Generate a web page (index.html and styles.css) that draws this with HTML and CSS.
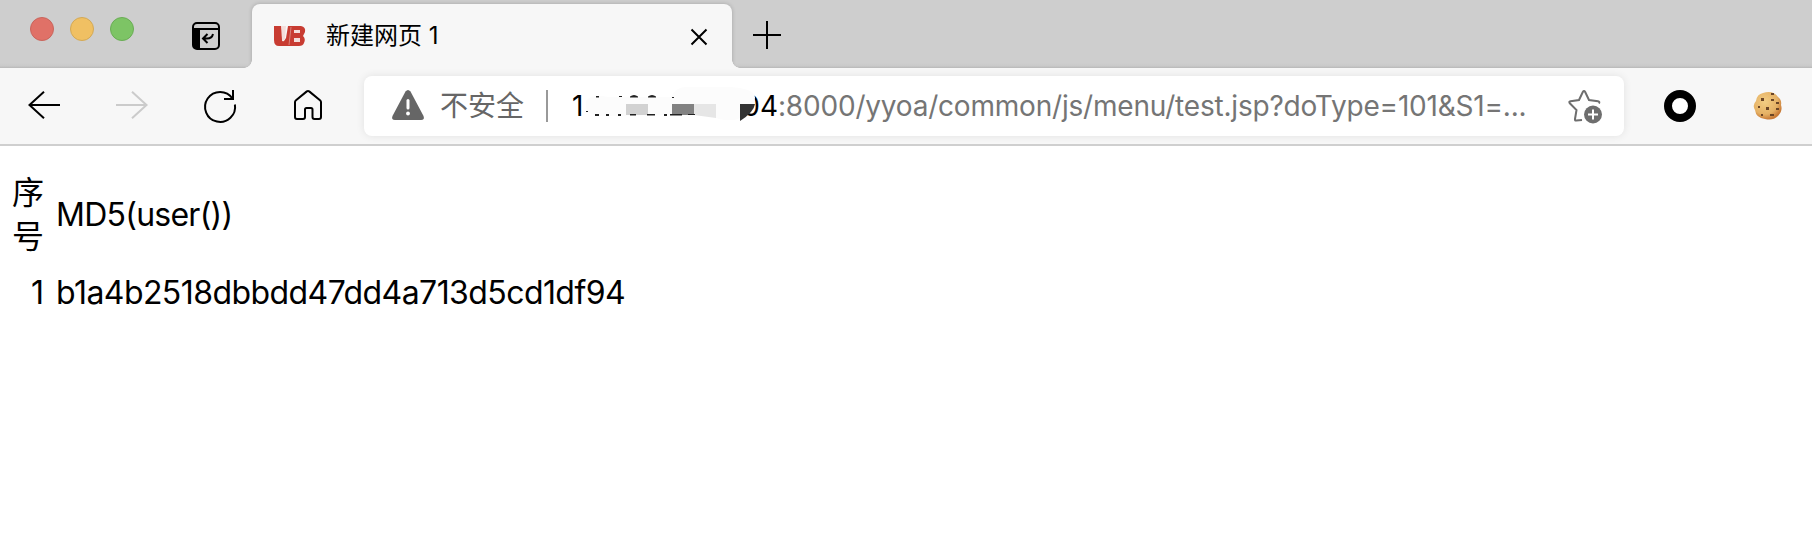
FILE: index.html
```html
<!DOCTYPE html>
<html lang="zh-CN">
<head>
<meta charset="utf-8">
<title>新建网页 1</title>
<link rel="stylesheet" href="styles.css">
</head>
<body>
<header class="tabstrip">
  <div class="lights"><i class="light red"></i><i class="light yellow"></i><i class="light green"></i></div>
  <svg class="tabmenu" width="28" height="28" viewBox="0 0 28 28"><rect x="1" y="1" width="26" height="26" rx="4" fill="none" stroke="#000" stroke-width="2"/><path d="M1 7H27" stroke="#000" stroke-width="2"/><path d="M1 6H8V27H4Q1 27 1 23Z"/><path d="M15.500 12L11 16.500L15.500 21M11.500 16.500H15Q20 16.500 21 12" fill="none" stroke="#000" stroke-width="2"/></svg>
  <div class="tab">
    <svg class="favicon" width="32" height="21" viewBox="0 0 32 21"><path d="M0 0H8V14Q8 16 10 15L12 12L14 0H27Q32 1 31 6L29 10Q32 13 30 17Q29 20 25 20H5Q0 20 0 14Z" fill="#c83c32"/><path d="M7 0H12L11 13Q9 16 8 14Z" fill="#f4dedb"/><path d="M20 4h6v3h-6zM20 12h6v4h-6z" fill="#f4dedb"/><path d="M17 1L15 19" fill="none" stroke="#d8827b" stroke-width="1"/></svg>
    <span class="tabtitle">新建网页 1</span>
    <svg class="close" width="18" height="18" viewBox="0 0 18 18"><path d="M1.500 1.500L16.500 16.500M16.500 1.500L1.500 16.500" stroke="#000" stroke-width="2"/></svg>
  </div>
  <svg class="plus" width="28" height="28" viewBox="0 0 28 28"><path d="M0 14H28M14 0V28" stroke="#000" stroke-width="2"/></svg>
</header>
<nav class="toolbar">
  <div class="nav">
    <svg width="32" height="28" viewBox="0 0 32 28"><path d="M16 .8L1.500 14L16 27.200M1.500 14H32" fill="none" stroke="#000" stroke-width="2"/></svg>
    <svg width="32" height="28" viewBox="0 0 32 28"><path d="M16 .8L30.500 14L16 27.200M30.500 14H0" fill="none" stroke="#cbcbcb" stroke-width="2"/></svg>
    <svg class="reload" width="32" height="32" viewBox="0 0 32 32"><path d="M30.900 14.500A15 15 0 1 1 28.500 8.500M29 0V9H20" fill="none" stroke="#000" stroke-width="2"/></svg>
    <svg class="home" width="28" height="30" viewBox="0 0 28 30"><path d="M1 12Q1 11 2 10.200L12.800 1.400Q14 .5 15.200 1.400L26 10.200Q27 11 27 12V27Q27 29 25 29H20.500Q18.500 29 18.500 27V19.500Q18.500 18 17 18H12.500Q11 18 11 19.500V27Q11 29 9 29H3Q1 29 1 27Z" fill="none" stroke="#000" stroke-width="2"/></svg>
  </div>
  <div class="address">
    <svg class="warning" width="32" height="30" viewBox="0 0 32 30"><path d="M13.500 1.500Q16-1.500 18.500 1.500L31.500 26Q33 30 29 30H3Q-1 30 .5 26Z" fill="#666"/><path d="M16 10.500V18" stroke="#fff" stroke-width="3" stroke-linecap="round"/><circle cx="16" cy="23.500" r="1.900" fill="#fff"/></svg>
    <span class="insecure">不安全</span>
    <i class="divider"></i>
    <span class="host"><span>1</span><span>04</span>
      <svg class="smudge" width="184" height="40" viewBox="0 0 184 40"><path d="M13 14Q19 6 35 10L98 10Q103 0 112 0L157 0Q180 1 182 10Q183 18 172 28Q162 36 146 32Q135 26 105 28L35 29Q14 30 13 20Z" fill="#fcfcfc"/><path d="M53 17H75V28H53Z" fill="#d2d2d2"/><path d="M99 17H121V28H99Z" fill="#828282"/><path d="M121 17H143V31L121 28Z" fill="#e6e6e6"/><path d="M167 17H182Q181 25 167 34Z" fill="#333"/><path d="M13 24h2v1h-2zM22 27h4v2h-4zM33 27h3v2h-3zM45 27h3v2h-3zM57 27h6v1.500h-6zM74 27h8v1.500h-8zM91 27h3v2h-3zM97 27h12v1.500H97zM115 27h7v1h-7zM23 9h3v1.500h-3zM46 9h3v1h-3zM57 9.500q4-3 8 0v1h-8zM75 9.500q4-3 8 0v1h-8zM99 10h2v1h-2z" fill="#222"/></svg>
    </span>
    <span class="path">:8000/yyoa/common/js/menu/test.jsp?doType=101&amp;S1=...</span>
    <svg class="star" width="35" height="34" viewBox="0 0 35 34"><path d="M14 30L8.300 30.500Q6.700 31 7 29L8.500 20L1.800 13.300Q.5 11.500 2.500 11.200L11 10L14.800 2Q16 0 17.200 2L21 10L30 11.200Q32 11.600 31 13.500" fill="none" stroke="#6e6e6e" stroke-width="2"/><circle cx="25" cy="24.500" r="9" fill="#6e6e6e"/><path d="M20 24.500H30M25 19.500V29.500" stroke="#fff" stroke-width="2"/></svg>
  </div>
  <svg class="ring" width="32" height="32" viewBox="0 0 32 32"><circle cx="16" cy="16" r="12" fill="#fff" stroke="#000" stroke-width="8"/></svg>
  <svg class="cookie" width="30" height="30" viewBox="0 0 30 30"><defs><radialGradient id="dough" cx=".4" cy=".35" r=".65"><stop offset="0" stop-color="#f3cd83"/><stop offset=".7" stop-color="#e5b165"/><stop offset="1" stop-color="#c97b37"/></radialGradient></defs><path d="M10 2Q20-1 25 6Q29 9 28 14Q30 20 25 25Q20 30 12 28Q3 27 2 19Q-1 14 3 10Q4 3 10 2Z" fill="url(#dough)"/><path d="M18 2h3v2h-3zM8 7h3v3H8zM18 8h3v2h-3zM13 16h3v3h-3zM23 11h3v2h-3zM5 15h2v2H5zM23 17h3v2h-3zM17 23h4v2h-4zM8 23h2v2H8z" fill="#6b4526"/></svg>
</nav>
<main class="page">
  <table class="result">
    <tr><td class="index">序号</td><td class="heading">MD5(user())</td></tr>
    <tr class="data"><td class="index">1</td><td class="hash">b1a4b2518dbbdd47dd4a713d5cd1df94</td></tr>
  </table>
</main>
</body>
</html>
```
FILE: styles.css
```css
* { box-sizing: border-box; }
body { margin: 0; width: 1812px; height: 556px; overflow: hidden; background: #fff; color: #000; font-family: Inter, "Noto Sans CJK SC", sans-serif; }
svg { display: block; flex: none; overflow: visible; }
.tabstrip { display: flex; align-items: flex-start; height: 68px; padding-left: 30px; background: linear-gradient(#cecece 63px, #c9c9c9 66px, #b8b8b8 68px); }
.lights { display: flex; gap: 16px; padding-top: 17px; }
.light { width: 24px; height: 24px; border-radius: 50%; border: 1px solid; }
.red { background: #e07167; border-color: #c9655c; }
.yellow { background: #f0c063; border-color: #d3a956; }
.green { background: #7dc465; border-color: #6aad55; }
.tabmenu { margin: 22px 0 0 58px; }
.tab { position: relative; display: flex; align-items: center; width: 480px; height: 64px; margin: 4px 0 0 32px; padding: 0 24px 8px 22px; background: #f7f7f7; border-radius: 8px 8px 0 0; box-shadow: 0 0 4px rgba(0,0,0,.2); clip-path: inset(-4px -8px 0 -8px); }
.tab::before, .tab::after { content: ""; position: absolute; bottom: 0; width: 8px; height: 8px; }
.tab::before { left: -8px; background: radial-gradient(circle at 0 0, transparent 7.500px, #f7f7f7 8px); }
.tab::after { right: -8px; background: radial-gradient(circle at 100% 0, transparent 7.500px, #f7f7f7 8px); }
.favicon { margin-top: 8px; }
.tabtitle { margin: 8px 0 0 20px; font-size: 24px; line-height: 32px; white-space: nowrap; }
.close { margin: 10px 0 0 auto; }
.plus { margin: 21px 0 0 21px; }
.toolbar { display: flex; align-items: center; height: 78px; padding: 0 29px 0 28px; background: #f7f7f7; border-bottom: 2px solid #cfcfcf; }
.nav { display: flex; align-items: center; gap: 56px; width: 336px; padding-bottom: 2px; }
.reload { margin-top: 2px; }
.home { margin-left: 2px; }
.address { display: flex; align-items: center; width: 1260px; height: 60px; padding: 0 21px 0 28px; background: #fff; border-radius: 8px; box-shadow: 0 0 8px rgba(0,0,0,.09); }
.warning { margin-top: -2px; }
.insecure { width: 86px; margin-left: 16px; font-size: 28px; line-height: 40px; color: #666; white-space: nowrap; }
.divider { width: 2px; height: 32px; margin-left: 20px; background: #999; }
.host { position: relative; display: flex; justify-content: space-between; width: 206px; margin-left: 24px; font-size: 28px; line-height: 40px; }
.smudge { position: absolute; left: 1px; top: 1px; }
.path { font-size: 28px; line-height: 40px; letter-spacing: -.2px; color: #757575; white-space: nowrap; }
.star { margin: 2px 0 0 auto; }
.ring { margin-left: 40px; }
.cookie { margin-left: auto; }
.page { padding: 25px 8px; }
.result { border-collapse: collapse; font-size: 32px; line-height: 44px; }
.result td { padding: 0 4px; vertical-align: middle; }
.result .index { width: 46px; padding: 0 10px 0 3px; text-align: right; word-break: break-all; }
.result .heading, .result .hash { padding-left: 2px; letter-spacing: -.57px; }
.result .heading { letter-spacing: -.75px; }
.result .data td { padding-top: 12px; }
```
